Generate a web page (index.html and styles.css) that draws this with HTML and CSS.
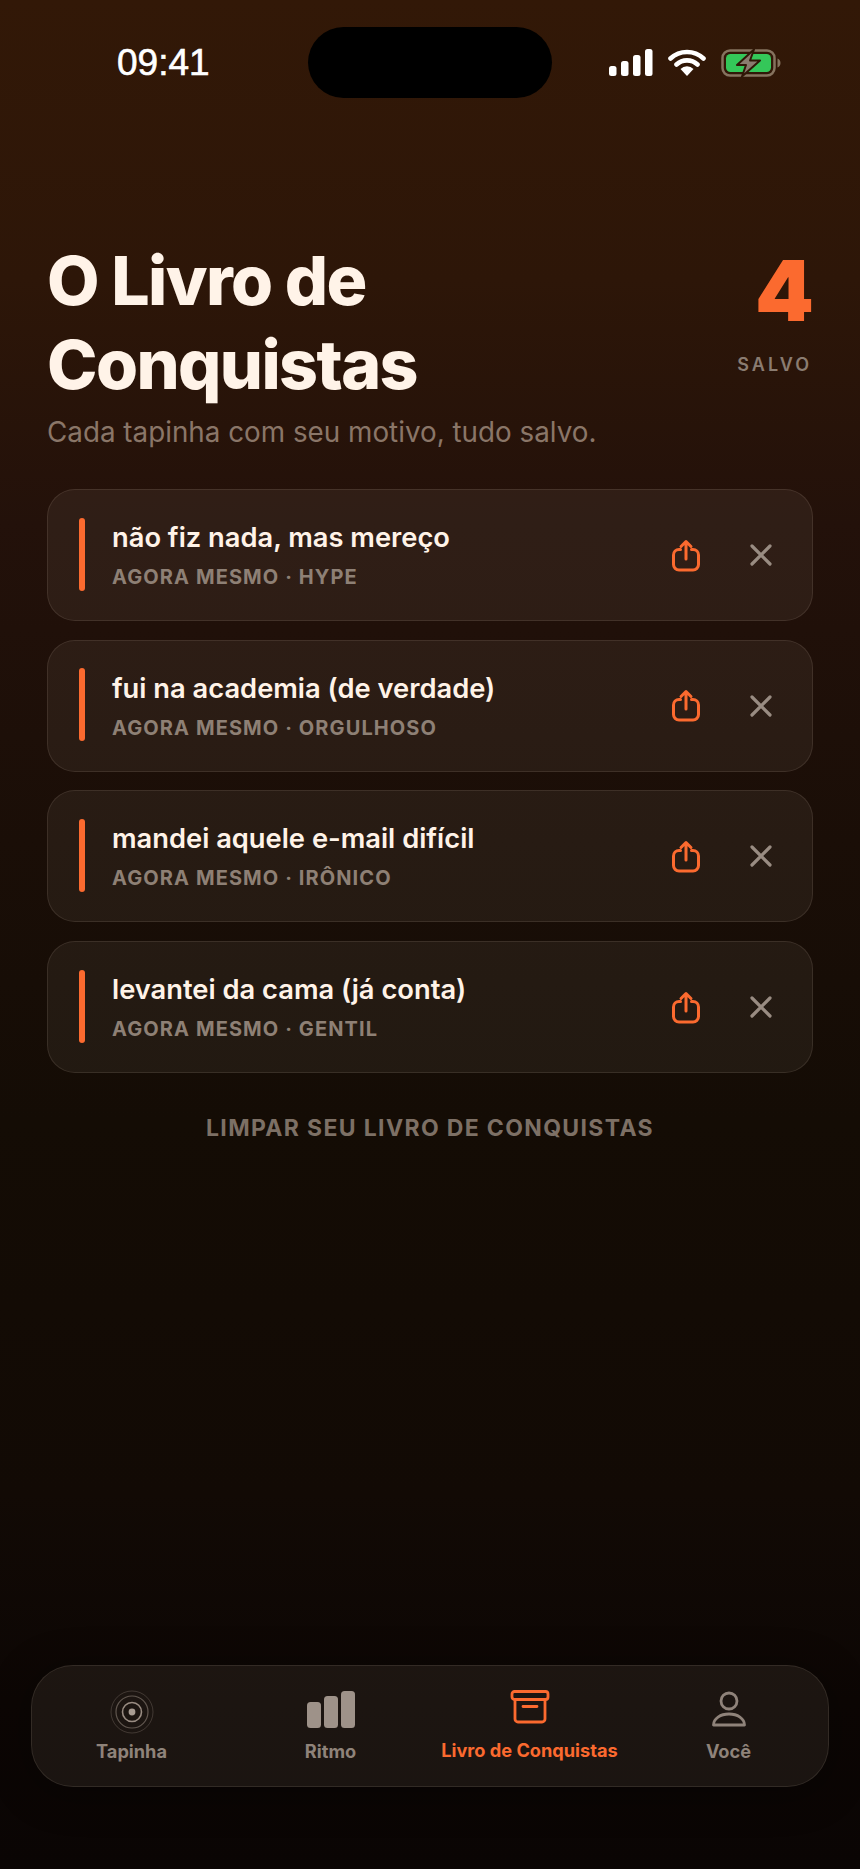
FILE: index.html
```html
<!DOCTYPE html>
<html lang="pt-BR">
<head>
<meta charset="utf-8">
<title>O Livro de Conquistas</title>
<link rel="stylesheet" href="styles.css">
</head>
<body>
<svg class="defs" width="0" height="0" aria-hidden="true">
  <symbol id="share" viewBox="0 0 28 33">
    <path d="M8.500 10.500H7a5.500 5.500 0 0 0-5.500 5.500v9.500a5.500 5.500 0 0 0 5.500 5.500h14a5.500 5.500 0 0 0 5.500-5.500V16a5.500 5.500 0 0 0-5.500-5.500h-1.500" fill="none" stroke="#fb6a2f" stroke-width="3" stroke-linecap="round"/>
    <path d="M14 20V2.500M9 7.500 14 2.500l5 5" fill="none" stroke="#fb6a2f" stroke-width="3" stroke-linecap="round" stroke-linejoin="round"/>
  </symbol>
  <symbol id="close" viewBox="0 0 22 22">
    <path d="M2 2l18 18M20 2 2 20" fill="none" stroke="#998c82" stroke-width="3.200" stroke-linecap="round"/>
  </symbol>
</svg>
<main class="screen">
  <header class="status">
    <div class="time">09:41</div>
    <div class="island"></div>
    <div class="status-icons">
      <svg class="sig" width="44" height="27" viewBox="0 0 44 27"><rect x="0" y="17" width="7.500" height="10" rx="2.500"/><rect x="12" y="12" width="7.500" height="15" rx="2.500"/><rect x="24" y="6" width="7.500" height="21" rx="2.500"/><rect x="36" y="0" width="7.500" height="27" rx="2.500"/></svg>
      <svg class="wifi" width="38" height="27" viewBox="0 0 38 27"><path d="M2.500 9.500a24 24 0 0 1 33 0M8.500 15.500a15.500 15.500 0 0 1 21 0" fill="none" stroke="#fff" stroke-width="4.600" stroke-linecap="round"/><path d="M19 27l-6.500-7a9 9 0 0 1 13 0z" fill="#fff"/></svg>
      <svg class="batt" width="60" height="28" viewBox="0 0 60 28">
        <rect x="1.500" y="1.500" width="52" height="25" rx="7.500" fill="none" stroke="#85735f" stroke-width="2.500"/>
        <path d="M56.500 9.500c2 .6 3 2.300 3 4.500s-1 3.900-3 4.500z" fill="#85735f"/>
        <rect x="5" y="5" width="45" height="18" rx="4.500" fill="#34c759"/>
        <path d="M33 .5 16 16h9L21 27.500 39 11.500H29z" fill="#8a7b6f" stroke="#2f1707" stroke-width="2" stroke-linejoin="round"/>
      </svg>
    </div>
  </header>

  <section class="head">
    <div class="head-text">
      <h1>O Livro de<br>Conquistas</h1>
      <p class="sub">Cada tapinha com seu motivo, tudo salvo.</p>
    </div>
    <div class="count">
      <div class="num">4</div>
      <div class="saved">SALVO</div>
    </div>
  </section>

  <section class="list">
    <article class="card">
      <span class="bar"></span>
      <div class="txt"><div class="ttl">não fiz nada, mas mereço</div><div class="meta">AGORA MESMO · HYPE</div></div>
      <svg class="ic-share"><use href="#share"/></svg>
      <svg class="ic-close"><use href="#close"/></svg>
    </article>
    <article class="card">
      <span class="bar"></span>
      <div class="txt"><div class="ttl">fui na academia (de verdade)</div><div class="meta">AGORA MESMO · ORGULHOSO</div></div>
      <svg class="ic-share"><use href="#share"/></svg>
      <svg class="ic-close"><use href="#close"/></svg>
    </article>
    <article class="card">
      <span class="bar"></span>
      <div class="txt"><div class="ttl">mandei aquele e-mail difícil</div><div class="meta">AGORA MESMO · IRÔNICO</div></div>
      <svg class="ic-share"><use href="#share"/></svg>
      <svg class="ic-close"><use href="#close"/></svg>
    </article>
    <article class="card">
      <span class="bar"></span>
      <div class="txt"><div class="ttl">levantei da cama (já conta)</div><div class="meta">AGORA MESMO · GENTIL</div></div>
      <svg class="ic-share"><use href="#share"/></svg>
      <svg class="ic-close"><use href="#close"/></svg>
    </article>
  </section>

  <div class="clear">LIMPAR SEU LIVRO DE CONQUISTAS</div>

  <nav class="tabs">
    <div class="tab">
      <svg class="tab-ic" width="44" height="44" viewBox="0 0 44 44" fill="none" stroke="#998c82"><circle cx="22" cy="22" r="21" stroke-width="1" opacity=".3"/><circle cx="22" cy="22" r="16" stroke-width="1.200" opacity=".55"/><circle cx="22" cy="22" r="9.500" stroke-width="1.600"/><circle cx="22" cy="22" r="3.400" fill="#a89c92" stroke="none"/></svg>
      <span class="lbl">Tapinha</span>
    </div>
    <div class="tab">
      <svg class="tab-ic" width="50" height="44" viewBox="0 0 50 44" fill="#9e9289"><rect x="1" y="12" width="14" height="26" rx="3.500"/><rect x="18" y="6" width="14" height="32" rx="3.500"/><rect x="35" y="1" width="14" height="37" rx="3.500"/></svg>
      <span class="lbl">Ritmo</span>
    </div>
    <div class="tab active">
      <svg class="tab-ic" width="40" height="44" viewBox="0 0 40 44" fill="none" stroke="#fb6a2f" stroke-width="2.800" stroke-linecap="round" stroke-linejoin="round"><rect x="2" y="1.500" width="36" height="8" rx="2.500"/><path d="M5 9.500V29a3 3 0 0 0 3 3h24a3 3 0 0 0 3-3V9.500M13 16.500h14"/></svg>
      <span class="lbl">Livro de Conquistas</span>
    </div>
    <div class="tab">
      <svg class="tab-ic" width="36" height="44" viewBox="0 0 36 44" fill="none" stroke="#8f837a" stroke-width="2.800" stroke-linejoin="round"><circle cx="18" cy="11" r="8"/><path d="M2.500 35c0-6.500 7-11 15.500-11s15.500 4.500 15.500 11z"/></svg>
      <span class="lbl">Você</span>
    </div>
  </nav>
</main>
</body>
</html>
```

FILE: styles.css
```css
* { box-sizing: border-box; }
html, body { margin: 0; padding: 0; }
body {
  width: 860px;
  height: 1869px;
  overflow: hidden;
  background: #0a0503;
  font-family: "Inter", "Liberation Sans", sans-serif;
}
.defs { position: absolute; }
.screen {
  width: 860px;
  height: 1869px;
  display: flex;
  flex-direction: column;
  background: linear-gradient(180deg, #321807 0%, #2d1608 15%, #23110a 28%, #1a0e07 45%, #140c05 60%, #120a05 80%, #0c0604 91%, #0a0504 100%);
}
.status {
  height: 71px;
  margin-top: 27px;
  padding: 0 79px 0 117px;
  display: flex;
  align-items: center;
}
.time {
  width: 191px;
  font-family: "Liberation Sans", sans-serif;
  font-size: 37px;
  color: #fff;
  -webkit-text-stroke: .6px #fff;
}
.island {
  width: 244px;
  height: 71px;
  background: #000;
  border-radius: 36px;
}
.status-icons {
  margin-left: auto;
  display: flex;
  align-items: center;
  gap: 15px;
}
.sig { fill: #fff; }
.head {
  margin-top: 142px;
  padding: 0 47px;
  display: flex;
  justify-content: space-between;
  align-items: flex-start;
}
h1 {
  margin: -2px 0 0;
  font-size: 68px;
  line-height: 84px;
  font-weight: 800;
  letter-spacing: -1.600px;
  color: #fff3e8;
}
.sub {
  margin: 9px 0 0;
  font-size: 27.800px;
  line-height: 34px;
  font-weight: 400;
  color: #8a7668;
}
.count { text-align: right; }
.num {
  font-size: 84px;
  line-height: 84px;
  font-weight: 900;
  color: #fb6a2f;
  margin-top: 9px;
  margin-right: -1px;
}
.saved {
  margin-top: 21px;
  font-size: 18px;
  line-height: 22px;
  font-weight: 600;
  letter-spacing: 3px;
  margin-right: 1px;
  color: #8a7c71;
}
.list {
  margin: 40px 47px 0;
  display: flex;
  flex-direction: column;
  gap: 18.700px;
}
.card {
  height: 132px;
  padding: 0 40.500px 0 31px;
  display: flex;
  align-items: center;
  border: 1.500px solid rgba(255, 235, 215, .1);
  border-radius: 28px;
  background: rgba(255, 235, 215, .058);
}
.bar {
  width: 5.500px;
  height: 73px;
  margin-bottom: 2px;
  border-radius: 3px;
  background: #fb6a2f;
}
.txt {
  flex: 1;
  margin-left: 27.500px;
  padding-top: 1px;
}
.ttl {
  font-size: 27.300px;
  line-height: 34px;
  font-weight: 600;
  color: #fff3e8;
}
.meta {
  margin-top: 9px;
  font-size: 20px;
  line-height: 26px;
  font-weight: 700;
  letter-spacing: 1.100px;
  color: #8e8075;
}
.ic-share {
  width: 28px;
  height: 33px;
  margin-right: 50px;
}
.ic-close {
  width: 22px;
  height: 22px;
}
.clear {
  margin-top: 41px;
  text-align: center;
  font-size: 23px;
  line-height: 28px;
  font-weight: 700;
  letter-spacing: 1.350px;
  color: #7d7065;
}
.tabs {
  margin: auto 31px 82px;
  height: 122px;
  display: grid;
  grid-template-columns: repeat(4, 1fr);
  border: 1.500px solid rgba(255, 235, 215, .1);
  border-radius: 42px;
  background: rgba(255, 235, 215, .065);
  box-shadow: 0 6px 40px rgba(0, 0, 0, .35);
}
.tab {
  display: flex;
  flex-direction: column;
  align-items: center;
  padding-top: 24px;
}
.tab-ic { display: block; }
.lbl {
  margin-top: 5px;
  font-size: 18.200px;
  line-height: 24px;
  font-weight: 700;
  color: #8f837a;
  white-space: nowrap;
}
.active .lbl { color: #fb6a2f; margin-top: 4px; }
```
